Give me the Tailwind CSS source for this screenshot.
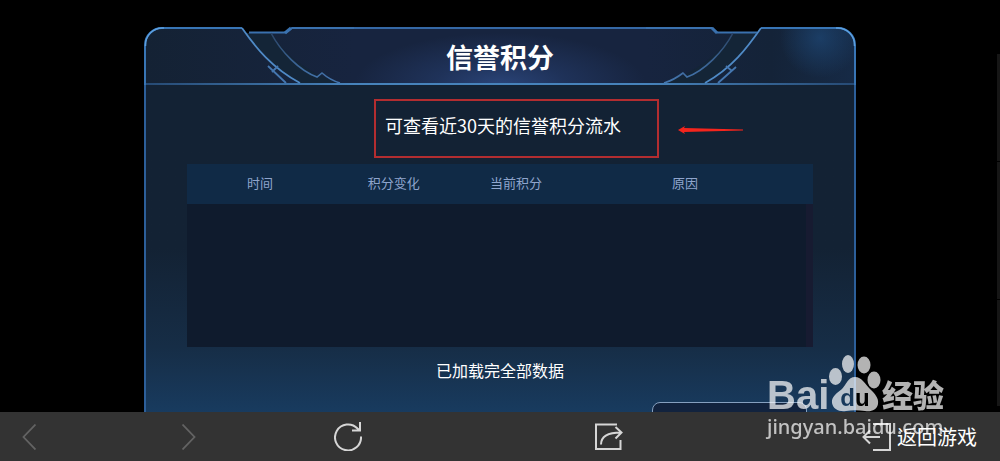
<!DOCTYPE html>
<html lang="zh-CN">
<head>
    <meta charset="UTF-8">
    <meta name="viewport" content="width=device-width, initial-scale=1.0">
    <title>信誉积分</title>
    <script src="https://cdn.jsdelivr.net/npm/@tailwindcss/browser@4"></script>
</head>
<body class="relative flex h-screen flex-col overflow-hidden bg-black font-['Noto_Sans_CJK_SC',sans-serif] text-white">
    <main class="min-h-0 flex-1 overflow-hidden px-36 pt-[26px]">
        <div class="flex min-h-full flex-col">
            <!-- Panel header: corners keep their shape, the middle stretches -->
            <header class="flex h-[59px] shrink-0">
                <svg class="h-[59px] w-[210px] shrink-0" viewBox="0 0 210 59" fill="none">
                    <defs>
                        <linearGradient id="leftFill" x1="0" x2="1" y1="0" y2="0">
                            <stop offset="0" stop-color="#142234"/>
                            <stop offset="1" stop-color="#17243f"/>
                        </linearGradient>
                        <linearGradient id="curve" x1="0" x2="0" y1="0" y2="1">
                            <stop offset="0" stop-color="#2b4568"/>
                            <stop offset="1" stop-color="#4577b0"/>
                        </linearGradient>
                        <linearGradient id="leftLine" gradientUnits="userSpaceOnUse" x1="0" x2="210" y1="0" y2="0">
                            <stop offset="0" stop-color="#264a74"/>
                            <stop offset="1" stop-color="#4783bb"/>
                        </linearGradient>
                    </defs>
                    <path d="M1 59V19A17 17 0 0 1 18 2H98L102 7H143L148 2H210V59Z" fill="url(#leftFill)"/>
                    <path d="M98 2Q130 44 156 58H196Q146 40 128 7H102Z" fill="#142537"/>
                    <path d="M0 57H210V59H0Z" fill="url(#leftLine)"/>
                    <path d="M1 59V19A17 17 0 0 1 18 2H98" stroke="#3875b5" stroke-width="2"/>
                    <path d="M1.500 20A17 17 0 0 1 20 2" stroke="#5b9fe0" stroke-width="1.500"/>
                    <path d="M98 2C112 22 128 42 156 57" stroke="#4f8ac6" stroke-width="1.800"/>
                    <path d="M105 6.500H142L148 2H210" stroke="#3a71ae" stroke-width="1.800"/>
                    <path d="M141 7L147 2" stroke="#3a71ae" stroke-width="3"/>
                    <path d="M127 7C137 26 156 45 173 51L178 47Q186 54 196 57" stroke="url(#curve)" stroke-width="1.600"/>
                    <path d="M124 40L142 57M134 40L128 46" stroke="#4577b0" stroke-width="1.800"/>
                </svg>
                <div class="mt-px flex min-w-0 flex-1 bg-[#17243f] bg-[radial-gradient(ellipse_50%_90%_at_bottom,#2a4478_0%,#1f3259_45%,#17243f_100%)] bg-no-repeat">
                    <div class="flex w-full items-center justify-center border-t-2 border-b-2 border-t-[#3568a5] border-b-[#4783bb]">
                        <h1 class="text-[27px] leading-none font-bold whitespace-nowrap">信誉积分</h1>
                    </div>
                </div>
                <svg class="h-[59px] w-[210px] shrink-0" viewBox="0 0 210 59" fill="none">
                    <defs>
                        <linearGradient id="rightFill" x1="0" x2="1" y1="0" y2="0">
                            <stop offset="0" stop-color="#17243f"/>
                            <stop offset="0.600" stop-color="#142338"/>
                            <stop offset="1" stop-color="#162a46"/>
                        </linearGradient>
                        <radialGradient id="rightGlow" gradientUnits="userSpaceOnUse" cx="174" cy="12" r="40">
                            <stop offset="0" stop-color="#1e4775" stop-opacity="0.700"/>
                            <stop offset="1" stop-color="#1e4775" stop-opacity="0"/>
                        </radialGradient>
                        <linearGradient id="rightLine" gradientUnits="userSpaceOnUse" x1="0" x2="210" y1="0" y2="0">
                            <stop offset="0" stop-color="#4783bb"/>
                            <stop offset="1" stop-color="#264a74"/>
                        </linearGradient>
                    </defs>
                    <path d="M0 2H66L70 7H112L115 2H192A17 17 0 0 1 209 19V59H0Z" fill="url(#rightFill)"/>
                    <path d="M115 2Q85 44 59 58H17Q66 40 87 7H111Z" fill="#142537"/>
                    <path d="M115 2H192A17 17 0 0 1 209 19V59H60Q100 30 115 2Z" fill="url(#rightGlow)"/>
                    <path d="M0 57H210V59H0Z" fill="url(#rightLine)"/>
                    <path d="M115 2H192A17 17 0 0 1 209 19V59" stroke="#3875b5" stroke-width="2"/>
                    <path d="M190 2A17 17 0 0 1 208.500 20" stroke="#5b9fe0" stroke-width="1.500"/>
                    <path d="M115 2C101 22 86 42 59 57" stroke="#4f8ac6" stroke-width="1.800"/>
                    <path d="M0 2H66L71 6.500H111" stroke="#3a71ae" stroke-width="1.800"/>
                    <path d="M66 2L71 7" stroke="#3a71ae" stroke-width="3"/>
                    <path d="M87 7C77 26 58 45 41 51L37 47Q28 54 18 57" stroke="url(#curve)" stroke-width="1.600"/>
                    <path d="M90 41L72 57M80 40L86 45" stroke="#4577b0" stroke-width="1.800"/>
                </svg>
            </header>

            <section class="flex flex-1 flex-col border-x-2 border-[#2c5f9a] bg-linear-to-b from-[#132234] from-50% via-[#162d46] via-80% to-[#183b5f] px-[41px] pt-[14px]">
                <div class="flex items-center justify-center gap-[19px] pl-[117px]">
                    <p class="h-[59px] w-[285px] border-2 border-[#b32d30] pt-[10px] pl-[9px] text-lg leading-7 whitespace-nowrap">可查看近30天的信誉积分流水</p>
                    <svg class="mt-[2px] h-2 w-[65px]" viewBox="0 0 65 8">
                        <path d="M0 4L7 0L6 2L65 3.500V4.500L6 6L7 8Z" fill="#f5251d"/>
                    </svg>
                </div>

                <table class="mt-[6px] w-full table-fixed border-separate border-spacing-0 text-[13px] leading-5 text-[#8fa5cd]">
                    <colgroup>
                        <col class="w-[23.3%]">
                        <col class="w-[19.5%]">
                        <col class="w-[19.5%]">
                        <col>
                    </colgroup>
                    <thead class="bg-[#102a46]">
                        <tr class="h-10">
                            <th class="p-0 pb-[2px] font-normal">时间</th>
                            <th class="p-0 pb-[2px] font-normal">积分变化</th>
                            <th class="p-0 pb-[2px] font-normal">当前积分</th>
                            <th class="p-0 pr-5 pb-[2px] font-normal">原因</th>
                        </tr>
                    </thead>
                    <tbody class="bg-[#0f1b2d]">
                        <tr class="h-[143px]">
                            <td colspan="4" class="border-r-[7px] border-[#171b31]"></td>
                        </tr>
                    </tbody>
                </table>

                <p class="mt-[11px] text-center text-base leading-6">已加载完全部数据</p>
                <button type="button" aria-label="关闭" class="mt-5 mr-[6px] -mb-10 h-12 w-[155px] shrink-0 self-end rounded-lg border border-[#86a0bf] bg-[#12233e]"></button>
            </section>
        </div>
    </main>

    <!-- Browser toolbar -->
    <nav class="relative grid h-[49px] shrink-0 grid-cols-[160fr_152fr_261fr_267fr_138fr] items-center bg-[#333] pl-[22px] text-[#d6d6d6]">
        <button type="button" aria-label="后退" class="w-[14px] text-[#636363]">
            <svg class="h-[26px] w-[14px]" viewBox="0 0 14 26" fill="none" stroke="currentColor" stroke-width="1.800"><path d="M13.500 .5L1.500 13L13.500 25.500"/></svg>
        </button>
        <button type="button" aria-label="前进" class="w-[14px] text-[#636363]">
            <svg class="h-[26px] w-[14px]" viewBox="0 0 14 26" fill="none" stroke="currentColor" stroke-width="1.800"><path d="M.5 .5L12.500 13L.5 25.500"/></svg>
        </button>
        <button type="button" aria-label="刷新" class="w-[28px]">
            <svg class="h-[29px] w-[28px]" viewBox="0 0 28 29" fill="none" stroke="currentColor" stroke-width="2"><path d="M27 14.500A13 13 0 1 1 23.500 6.500L26 8.500M26 0V8.500H18"/></svg>
        </button>
        <button type="button" aria-label="分享" class="w-[28px]">
            <svg class="h-[27px] w-[28px]" viewBox="0 0 28 27" fill="none" stroke="currentColor" stroke-width="2"><path d="M22 1.500H1V26H25.500V17M6 21.500C6 13 14 9.500 26 9.500M20.500 4L26.500 9.500L20.500 15.500"/></svg>
        </button>
        <button type="button" class="flex items-center gap-[6px] whitespace-nowrap">
            <svg class="h-[28px] w-[29px]" viewBox="0 0 29 28" fill="none" stroke="currentColor" stroke-width="2"><path d="M11 1H28V27H11M18 14H1.500M8 7.500L1.500 14L8 20.500"/></svg>
            <span class="text-xl leading-7 text-white">返回游戏</span>
        </button>
    </nav>

    <!-- Screen edge -->
    <div class="absolute top-[54px] right-0 flex h-[352px] w-[3px] flex-col gap-px">
        <div class="flex-[107] bg-[#161616]"></div>
        <div class="flex-[137] bg-[#161616]"></div>
        <div class="flex-[106] bg-[#161616]"></div>
    </div>

    <!-- Watermark -->
    <div class="pointer-events-none absolute right-[56px] bottom-[20px] w-[177px] text-white opacity-70">
        <div class="flex h-[58px] items-end">
            <span class="w-[62px] font-['Liberation_Sans',sans-serif] text-[40px] leading-[36px] font-bold">Bai</span>
            <svg class="mb-px h-[57px] w-[53px] shrink-0" viewBox="0 0 53 57" fill="currentColor">
                <mask id="du">
                    <path fill="#fff" d="M0 0H53V57H0Z"/>
                    <text x="26" y="51" text-anchor="middle" font-family="Liberation Sans, sans-serif" font-size="24" font-weight="bold" fill="#000">du</text>
                </mask>
                <ellipse cx="6.500" cy="21.500" rx="6.500" ry="8.500"/>
                <ellipse cx="19" cy="9" rx="6" ry="9"/>
                <ellipse cx="35" cy="10" rx="6.500" ry="8.500"/>
                <ellipse cx="45" cy="25" rx="6.500" ry="8.500"/>
                <path mask="url(#du)" d="M26 22C33 22 36 29 41 34C46 39 50 43 49 49C48 55 42 57 36 56C29 55 23 55 17 56C10 57 4 54 3 48C2 42 8 38 13 34C17 30 19 22 26 22Z"/>
            </svg>
            <span class="text-[31px] leading-[38px] font-black whitespace-nowrap">经验</span>
        </div>
        <div class="font-['Noto_Sans',sans-serif] text-[20px] leading-7 font-medium">jingyan.baidu.com</div>
    </div>
</body>
</html>
